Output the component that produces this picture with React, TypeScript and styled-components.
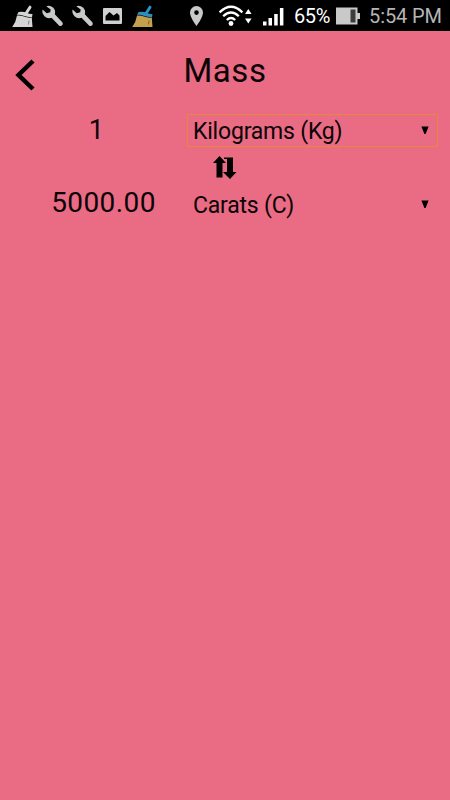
import React from "react";
import styled, { createGlobalStyle } from "styled-components";

const GlobalStyle = createGlobalStyle`
  * { box-sizing: border-box; }
  body { margin: 0; background: #e96b84; }
`;

const Screen = styled.div`
  display: flex;
  flex-direction: column;
  width: 450px;
  height: 800px;
  overflow: hidden;
  background: #e96b84;
  color: #0b0306;
  font-family: Roboto, "Noto Sans", sans-serif;
`;

const StatusBar = styled.header`
  display: flex;
  align-items: center;
  flex: none;
  height: 31px;
  padding: 0 8px 0 11px;
  background: #000;
`;

const Notifications = styled.div`
  display: flex;
  gap: 6px;
`;

const SystemStatus = styled.div`
  display: flex;
  align-items: center;
  height: 31px;
  margin-left: auto;
`;

const StatusIcon = styled.svg<{ $gap?: number }>`
  display: block;
  flex: none;
  margin-right: ${(p) => p.$gap ?? 0}px;
`;

const StatusText = styled.span<{ $color: string; $width: number; $spacing: number }>`
  width: ${(p) => p.$width}px;
  padding-top: 2px;
  color: ${(p) => p.$color};
  font-size: 20px;
  line-height: 31px;
  letter-spacing: ${(p) => p.$spacing}px;
  white-space: nowrap;
`;

const TitleBar = styled.div`
  display: grid;
  grid-template-columns: 50px 1fr 50px;
  align-items: center;
  height: 83px;
`;

const BackButton = styled.button`
  width: 50px;
  height: 50px;
  margin-top: 5px;
  padding: 0;
  border: 0;
  background: none;
  color: #000;
`;

const Title = styled.h1`
  margin: 0 0 3px;
  font-size: 33px;
  font-weight: 400;
  line-height: 80px;
  letter-spacing: 0.6px;
  text-align: center;
`;

const Converter = styled.main`
  display: grid;
  grid-template-columns: 187px 251px;
  grid-template-rows: 33px 41px 33px;
`;

const Amount = styled.div<{ $size: number; $shift: number; $line: number }>`
  padding-left: ${(p) => p.$shift}px;
  font-size: ${(p) => p.$size}px;
  line-height: ${(p) => p.$line}px;
  letter-spacing: 0.4px;
  text-align: center;
`;

const UnitSelect = styled.div<{ $focused?: boolean }>`
  display: flex;
  align-items: center;
  justify-content: space-between;
  height: 33px;
  padding: 0 8px 0 5px;
  border: 1px solid ${(p) => (p.$focused ? "#e6863f" : "transparent")};
  font-size: 23px;
  letter-spacing: -0.2px;
`;

const UnitName = styled.span`
  padding-top: 2px;
  line-height: 29px;
`;

const SwapButton = styled.button`
  grid-column: 2;
  width: 75px;
  height: 41px;
  padding: 3px 0 0;
  border: 0;
  background: none;
  color: #000;
`;

const Broom = ({ handle, bristles }: { handle: string; bristles: string }) => (
  <StatusIcon width="24" height="24" viewBox="0 0 24 24">
    <path d="M19 3.200 15 9.500" stroke={handle} strokeWidth="3" strokeLinecap="round" />
    <path d="M7.500 8Q12 7.200 15.500 8.800T21.500 10L21 13.200Q16 13.200 12.500 11.800T6 11Z" fill={handle} />
    <path d="M6 11.500Q10 11.200 13 12.600T20.800 13.600L21.500 23H1.200Q5 18 6 11.500Z" fill={bristles} />
    <path d="M18 16.500 17.500 20.500" stroke="#000" strokeOpacity=".5" strokeWidth=".8" />
  </StatusIcon>
);

const Wrench = () => (
  <StatusIcon width="24" height="24" viewBox="0 0 24 24">
    <path
      fill="#c9c9c9"
      d="M5.300 2.200Q8.800.8 12 3.500Q15 6.300 13.800 10.300L21.300 18.200Q22.500 20 21.200 21.300Q19.800 22.800 18 21.500L10.500 13.800Q6.300 15 3.500 12.200Q.6 9.200 1.600 5.600L5.700 9.200 9.200 8.300 9.700 5.500Z"
    />
  </StatusIcon>
);

const Caret = () => (
  <svg width="8" height="10" viewBox="0 0 8 10">
    <path d="M.4.5H7.600L4.600 8H3.400Z" fill="#000" />
  </svg>
);

export default function App() {
  return (
    <Screen>
      <GlobalStyle />
      <StatusBar>
        <Notifications>
          <Broom handle="#d5d5d5" bristles="#d5d5d5" />
          <Wrench />
          <Wrench />
          <StatusIcon width="24" height="24" viewBox="0 0 24 24">
            <path
              fill="#d0d0d0"
              fillRule="evenodd"
              d="M3 4H20Q21 4 21 5V19Q21 20 20 20H3Q2 20 2 19V5Q2 4 3 4ZM4.500 16.500H18.500V11.500L16 9 12.500 11.500 8.500 8 4.500 12Z"
            />
          </StatusIcon>
          <Broom handle="#2b8fc0" bristles="#c3a04d" />
        </Notifications>
        <SystemStatus>
          <StatusIcon $gap={15} width="14" height="20" viewBox="0 0 14 20">
            <path
              fill="#c9c9c9"
              fillRule="evenodd"
              d="M6.500 0A6.500 6.500 0 0 0 0 6.500C0 11.500 6.500 20 6.500 20S13 11.500 13 6.500A6.500 6.500 0 0 0 6.500 0ZM6.500 4.300A2.300 2.300 0 1 1 6.500 8.900 2.300 2.300 0 0 1 6.500 4.300Z"
            />
          </StatusIcon>
          <StatusIcon $gap={10} width="34" height="22" viewBox="0 0 34 22">
            <g fill="none" stroke="#fff" strokeWidth="2.300">
              <path d="M.6 7.300Q12-3.700 23.400 7.300" />
              <path d="M4.200 11.300Q12 3.700 19.800 11.300" />
              <path d="M7.800 15Q12 11 16.200 15" />
            </g>
            <circle cx="12" cy="18.500" r="2.400" fill="#fff" />
            <path d="M26 9 29.300 4 32.600 9ZM26 13.500H32.600L29.300 18.500Z" fill="#fff" />
          </StatusIcon>
          <StatusIcon $gap={10} width="21" height="20" viewBox="0 0 21 20">
            <path d="M0 15.500H3.500V19.500H0ZM5.500 12H9V19.500H5.500ZM11.200 8H14.700V19.500H11.200ZM16.900 2H20.400V19.500H16.900Z" fill="#fff" />
          </StatusIcon>
          <StatusText $color="#fff" $width={42} $spacing={-0.4}>65%</StatusText>
          <StatusIcon $gap={9} width="24" height="18" viewBox="0 0 24 18">
            <path d="M0 .5H21.500V6H24V12H21.500V17.500H0Z" fill="#c9c9c9" />
            <path d="M14.500 2.500H19.500V15.500H14.500Z" fill="#3c3c3c" />
          </StatusIcon>
          <StatusText $color="#b5b5b5" $width={73} $spacing={-0.1}>5:54 PM</StatusText>
        </SystemStatus>
      </StatusBar>
      <TitleBar>
        <BackButton aria-label="Back">
          <svg width="50" height="50" viewBox="0 0 50 50">
            <path d="M33 11 18.500 25 33 39" fill="none" stroke="currentColor" strokeWidth="4.500" />
          </svg>
        </BackButton>
        <Title>Mass</Title>
      </TitleBar>
      <Converter>
        <Amount $size={27} $shift={6} $line={32}>1</Amount>
        <UnitSelect $focused>
          <UnitName>Kilograms (Kg)</UnitName>
          <Caret />
        </UnitSelect>
        <SwapButton aria-label="Swap units">
          <svg width="24" height="24" viewBox="0 0 24 24">
            <path d="M6.500 0 13 7H9.500V21.500H3.500V7H0ZM11 1.500H20V16H23.500L17 23 10 16H14V3H11Z" fill="currentColor" />
          </svg>
        </SwapButton>
        <Amount $size={28} $shift={20} $line={30}>5000.00</Amount>
        <UnitSelect>
          <UnitName>Carats (C)</UnitName>
          <Caret />
        </UnitSelect>
      </Converter>
    </Screen>
  );
}
